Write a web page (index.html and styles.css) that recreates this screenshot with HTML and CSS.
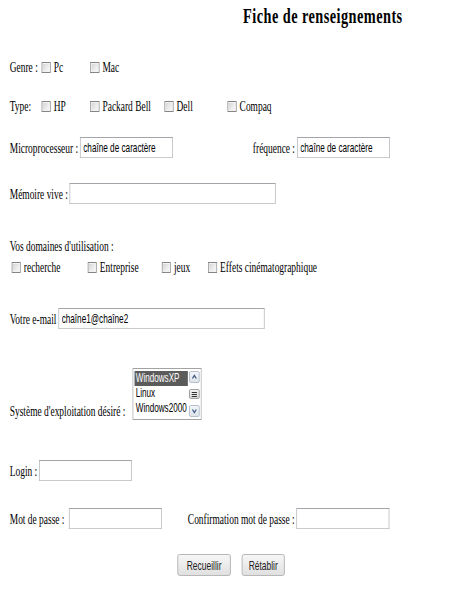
FILE: index.html
```html
<!DOCTYPE html>
<html lang="fr">
<head>
<meta charset="utf-8">
<title>Fiche de renseignements</title>
<link rel="stylesheet" href="styles.css">
</head>
<body>
<div class="frame">
<div class="page">
  <h1 class="title">Fiche de renseignements</h1>
  <form class="form">
    <div class="row grid-opts r-genre">
      <span>Genre :</span>
      <label class="opt"><input type="checkbox" class="cb"> Pc</label>
      <label class="opt"><input type="checkbox" class="cb"> Mac</label>
    </div>
    <div class="row grid-opts r-type">
      <span>Type:</span>
      <label class="opt"><input type="checkbox" class="cb"> HP</label>
      <label class="opt"><input type="checkbox" class="cb"> Packard Bell</label>
      <label class="opt"><input type="checkbox" class="cb"> Dell</label>
      <label class="opt"><input type="checkbox" class="cb"> Compaq</label>
    </div>
    <div class="row r-micro">
      <div class="grp grp-micro">
        <span>Microprocesseur :</span>
        <input type="text" class="txt" value="chaîne de caractère">
      </div>
      <div class="grp">
        <span>fréquence :</span>
        <input type="text" class="txt" value="chaîne de caractère">
      </div>
    </div>
    <div class="row r-mem">
      <div class="grp">
        <span>Mémoire vive :</span>
        <input type="text" class="txt wide">
      </div>
    </div>
    <div class="r-vos">Vos domaines d'utilisation :</div>
    <div class="row grid-dom r-dom">
      <label class="opt"><input type="checkbox" class="cb"> recherche</label>
      <label class="opt"><input type="checkbox" class="cb"> Entreprise</label>
      <label class="opt"><input type="checkbox" class="cb"> jeux</label>
      <label class="opt"><input type="checkbox" class="cb"> Effets cinématographique</label>
    </div>
    <div class="row r-mail">
      <div class="grp">
        <span>Votre e-mail</span>
        <input type="text" class="txt wide" value="chaîne1@chaîne2">
      </div>
    </div>
    <div class="row r-os">
      <span>Système d'exploitation désiré :</span>
      <div class="listbox">
        <div class="list-items">
          <div class="list-item selected">WindowsXP</div>
          <div class="list-item">Linux</div>
          <div class="list-item">Windows2000</div>
        </div>
        <div class="scrollbar">
          <div class="sb-btn">
            <svg viewBox="0 0 10 8" class="sb-arrow"><path d="M2 5.5 L5 2.5 L8 5.5" fill="none" stroke="#3f5a86" stroke-width="1.6"/></svg>
          </div>
          <div class="sb-thumb">
            <span class="grip"></span><span class="grip"></span><span class="grip"></span>
          </div>
          <div class="sb-btn">
            <svg viewBox="0 0 10 8" class="sb-arrow"><path d="M2 2.5 L5 5.5 L8 2.5" fill="none" stroke="#3f5a86" stroke-width="1.6"/></svg>
          </div>
        </div>
      </div>
    </div>
    <div class="row r-login">
      <div class="grp">
        <span>Login :</span>
        <input type="text" class="txt">
      </div>
    </div>
    <div class="row r-pass">
      <div class="grp grp-pass">
        <span>Mot de passe :</span>
        <input type="password" class="txt">
      </div>
      <div class="grp">
        <span>Confirmation mot de passe :</span>
        <input type="password" class="txt">
      </div>
    </div>
    <div class="row r-btn">
      <button type="submit" class="btn btn-submit">Recueillir</button>
      <button type="reset" class="btn btn-reset">Rétablir</button>
    </div>
  </form>
</div>
</div>
</body>
</html>
```
FILE: styles.css
```css
html, body {
  margin: 0;
  padding: 0;
  overflow: hidden;
  background: #ffffff;
}

body {
  font-family: "Liberation Serif", "Times New Roman", serif;
  font-size: 14.5px;
  line-height: 18px;
  color: #000000;
}

.frame {
  width: 469px;
  height: 592px;
  overflow: clip;
}

.page {
  width: 720px;
  box-sizing: border-box;
  padding: 3px 0 0 15px;
  transform: scaleX(0.65);
  transform-origin: 0 0;
}

.title {
  margin: 0 0 0 359px;
  font-size: 22px;
  line-height: 26px;
  font-weight: bold;
  letter-spacing: 0.7px;
}

.form {
  margin: 0;
}

.row {
  display: flex;
  align-items: center;
}

.grid-opts {
  display: grid;
  grid-template-columns: 49px 75px 114px 97px auto;
  align-items: center;
  height: 18px;
}

.grid-dom {
  display: grid;
  grid-template-columns: 117px 114px 71px auto;
  align-items: center;
  height: 18px;
  padding-left: 3px;
}

.opt {
  display: flex;
  align-items: center;
  white-space: pre;
}

.cb {
  appearance: none;
  -webkit-appearance: none;
  width: 14px;
  height: 11px;
  margin: 1px 1px 0 0;
  box-sizing: border-box;
  border: 1px solid #858585;
  background: linear-gradient(135deg, #d2d2d2 0%, #ebebeb 55%, #fafafa 100%);
  box-shadow: inset 0 0 0 1px #f2f2f2;
}

.r-genre { margin-top: 29px; }
.r-type { margin-top: 21px; }

.grp {
  display: flex;
  align-items: center;
  gap: 3px;
  white-space: nowrap;
}

.grp-micro { width: 374px; }
.grp-pass { width: 274px; }
.grp-pass .txt { margin-left: 4px; }

.txt {
  width: 143px;
  height: 21px;
  box-sizing: border-box;
  margin: 0;
  padding: 0 4px;
  border: 1px solid #abadb3;
  border-top-color: #a3a5aa;
  border-bottom-color: #c9cacd;
  font-family: "Liberation Sans", Arial, sans-serif;
  font-size: 12.6px;
  color: #000000;
  background: #ffffff;
}

.txt.wide { width: 317px; }

.r-micro { margin-top: 22px; height: 21px; }
.r-mem { margin-top: 25px; height: 21px; }

.r-vos {
  margin-top: 33px;
  height: 18px;
}

.r-dom { margin-top: 3px; }

.r-mail { margin-top: 32px; height: 21px; }

.r-os {
  margin-top: 39px;
  height: 52px;
  align-items: flex-end;
  gap: 11px;
}

.listbox {
  display: flex;
  width: 106px;
  height: 52px;
  box-sizing: border-box;
  border: 1px solid #a3a3a3;
  padding: 2px;
  background: #ffffff;
}

.list-items {
  flex: 1;
  font-family: "Liberation Sans", Arial, sans-serif;
  font-size: 12.5px;
  line-height: 15px;
}

.list-item {
  padding: 0 2px;
  height: 15px;
  white-space: nowrap;
}

.list-item.selected {
  background: #5b5b5b;
  color: #ffffff;
}

.scrollbar {
  width: 16px;
  margin-left: 2px;
  display: flex;
  flex-direction: column;
  justify-content: space-between;
}

.sb-btn {
  height: 12px;
  box-sizing: border-box;
  border: 1px solid #a9b3c4;
  border-radius: 2px;
  background: linear-gradient(#f3f5f8, #dde3ea);
  display: flex;
  align-items: center;
  justify-content: center;
}

.sb-arrow {
  width: 10px;
  height: 8px;
}

.sb-thumb {
  height: 10px;
  box-sizing: border-box;
  border: 1px solid #8c8c8c;
  border-radius: 2px;
  background: linear-gradient(#f1f1f1, #d9d9d9);
  display: flex;
  flex-direction: column;
  align-items: center;
  justify-content: center;
  gap: 1px;
}

.grip {
  display: block;
  width: 8px;
  height: 1px;
  background: #333333;
}

.r-login { margin-top: 40px; height: 21px; }
.r-pass { margin-top: 27px; height: 21px; }

.r-btn {
  margin-top: 25px;
  height: 22px;
  padding-left: 258px;
  gap: 17px;
}

.btn {
  height: 22px;
  box-sizing: border-box;
  margin: 0;
  padding: 0;
  border: 1px solid #a7a7a7;
  border-radius: 3px;
  background: linear-gradient(#f6f6f6 0%, #ececec 50%, #e0e0e0 100%);
  font-family: "Liberation Sans", Arial, sans-serif;
  font-size: 13px;
  color: #222222;
}

.btn-submit { width: 82px; }
.btn-reset { width: 66px; }
```
